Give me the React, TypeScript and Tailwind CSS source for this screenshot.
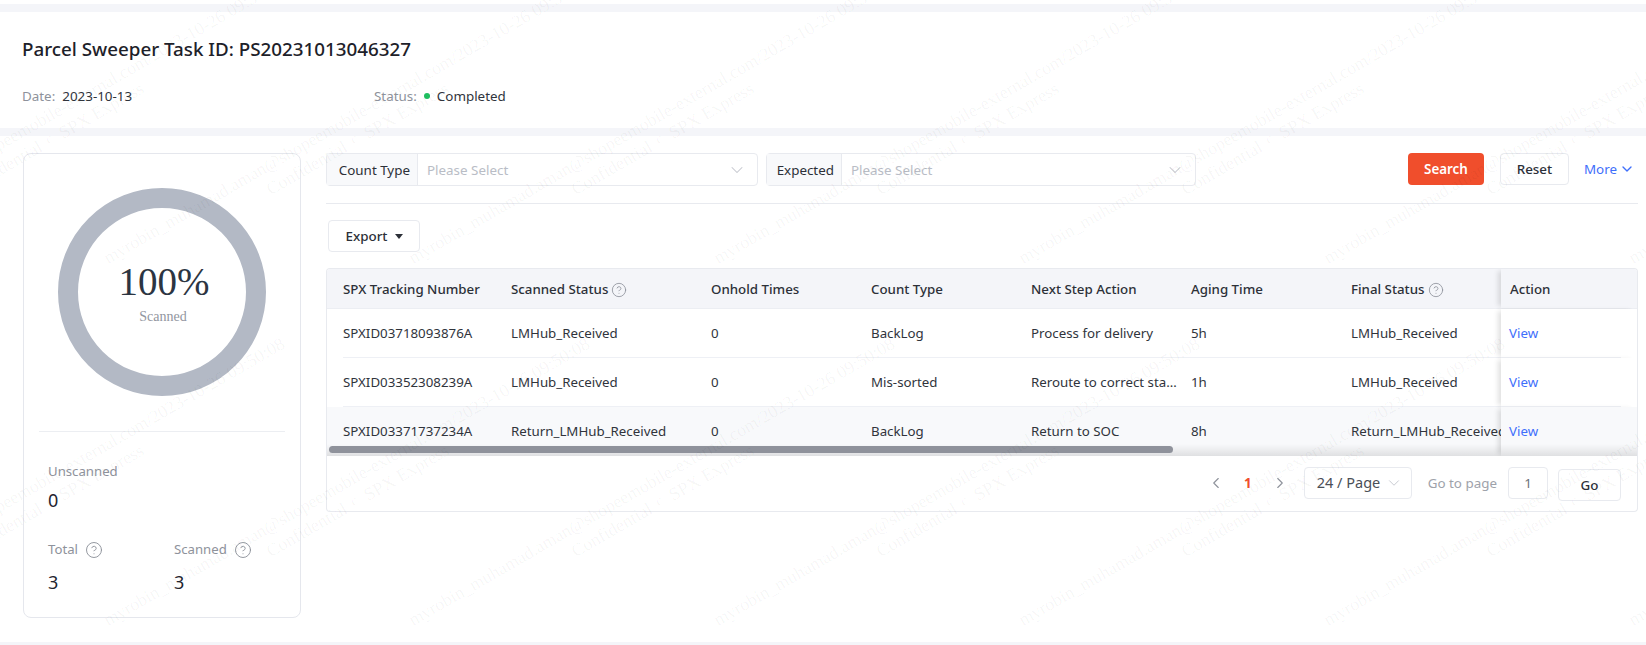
import React from 'react';
import { ChevronDown, ChevronLeft, ChevronRight, CircleHelp } from 'lucide-react';

const FONT = "font-['Noto_Sans','Liberation_Sans',sans-serif]";

const rows = [
  { id: 'SPXID03718093876A', scanned: 'LMHub_Received', onhold: '0', count: 'BackLog', next: 'Process for delivery', aging: '5h', final: 'LMHub_Received' },
  { id: 'SPXID03352308239A', scanned: 'LMHub_Received', onhold: '0', count: 'Mis-sorted', next: 'Reroute to correct station', aging: '1h', final: 'LMHub_Received' },
  { id: 'SPXID03371737234A', scanned: 'Return_LMHub_Received', onhold: '0', count: 'BackLog', next: 'Return to SOC', aging: '8h', final: 'Return_LMHub_Received' },
];

const columns = 'grid grid-cols-[168px_200px_160px_160px_160px_160px_150px]';

function Help({ className }: { className?: string }) {
  return <CircleHelp className={className} strokeWidth={1.25} />;
}

function Watermark() {
  const tiles = Array.from({ length: 16 }, (_, i) => i);
  return (
    <div className="absolute inset-0 overflow-hidden pointer-events-none">
      <div className="absolute left-[-411px] top-[-52px] grid grid-cols-[repeat(8,305px)] grid-rows-[repeat(2,362px)]">
        {tiles.map((i) => (
          <div key={i} className="flex items-center justify-center">
            <div className="-rotate-30 shrink-0 whitespace-nowrap text-center font-['Liberation_Serif',serif] text-[18px] leading-[22px] text-black/[0.045]">
              <div>myrobin_muhamad.aman@shopeemobile-external.com/2023-10-26 09:50:08</div>
              <div>Confidential © SPX Express</div>
            </div>
          </div>
        ))}
      </div>
    </div>
  );
}

function Donut() {
  return (
    <svg width="208" height="208" viewBox="0 0 208 208" className="mx-auto block">
      <circle cx="104" cy="104" r="94" fill="none" stroke="#b3b9c5" strokeWidth="20" />
      <text x="106" y="107" textAnchor="middle" fontFamily="'Liberation Serif', serif" fontSize="39" fill="#2c3542">100%</text>
      <text x="105" y="133" textAnchor="middle" fontFamily="'Liberation Serif', serif" fontSize="14" fill="#9296a0">Scanned</text>
    </svg>
  );
}

function SummaryCard() {
  return (
    <div className="w-[278px] h-[465px] shrink-0 rounded-lg border border-[#e5e7ed] pt-[34px] px-[15px]">
      <Donut />
      <div className="mt-[35px] border-t border-[#eceef2]" />
      <div className="pl-[9px] pt-[29px]">
        <div className="text-[13.2px] leading-[20px] text-[#8e929b]">Unscanned</div>
        <div className="mt-[7px] text-[18px] leading-[24px] text-[#1f2530]">0</div>
        <div className="mt-[27px] grid grid-cols-[126px_1fr]">
          <div>
            <div className="flex items-center gap-[7px] text-[13.2px] leading-[20px] text-[#8e929b]">
              Total <Help className="w-[18px] h-[18px] mt-[2px]" />
            </div>
            <div className="mt-[11px] text-[18px] leading-[24px] text-[#1f2530]">3</div>
          </div>
          <div>
            <div className="flex items-center gap-[7px] text-[13.2px] leading-[20px] text-[#8e929b]">
              Scanned <Help className="w-[18px] h-[18px] mt-[2px]" />
            </div>
            <div className="mt-[11px] text-[18px] leading-[24px] text-[#1f2530]">3</div>
          </div>
        </div>
      </div>
    </div>
  );
}

function FilterSelect({ label, labelWidth, width }: { label: string; labelWidth: string; width: string }) {
  return (
    <div className={`flex h-[33px] rounded border border-[#e8eaef] text-[13.4px] ${width}`}>
      <div className={`flex items-center justify-end border-r border-[#e8eaef] bg-[#f8f9fb] pr-[7px] pt-px text-[#2c3038] ${labelWidth}`}>{label}</div>
      <div className="flex flex-1 items-center justify-between pl-[9px] pr-[10px] pt-px text-[#b9bdc6]">
        Please Select
        <ChevronDown className="w-5 h-5 text-[#c4c7ce]" strokeWidth={1.25} />
      </div>
    </div>
  );
}

function Filters() {
  return (
    <div className="flex items-start border-b border-[#e8eaef] h-[51px]">
      <div className="flex gap-2">
        <FilterSelect label="Count Type" labelWidth="w-[91px]" width="w-[432px]" />
        <FilterSelect label="Expected" labelWidth="w-[75px]" width="w-[430px]" />
      </div>
      <div className="ml-auto flex items-center text-[13.4px]">
        <button className="h-[32px] w-[76px] rounded bg-[#f04e2c] pt-px font-semibold text-white">Search</button>
        <button className="ml-4 h-[32px] w-[69px] rounded border border-[#e8eaef] pt-px font-medium text-[#2c3038]">Reset</button>
        <button className="ml-[15px] mr-[3px] flex items-center gap-[2px] text-[#3f6ffb]">
          More <ChevronDown className="w-4 h-4" strokeWidth={2} />
        </button>
      </div>
    </div>
  );
}

function ResultTable() {
  return (
    <div className="relative rounded-t border-x border-t border-[#e8eaef] overflow-hidden text-[13.3px] text-[#30343c]">
      <div className="flex h-[40px] bg-[#f4f5f9] border-b border-[#eceef3] font-medium text-[#2c3038]">
        <div className={`${columns} flex-1 min-w-0 overflow-hidden pl-4 pt-[2px] items-center`}>
          <div>SPX Tracking Number</div>
          <div className="flex items-center gap-[3px]">Scanned Status <Help className="w-4 h-4 text-[#8e929b]" /></div>
          <div>Onhold Times</div>
          <div>Count Type</div>
          <div>Next Step Action</div>
          <div>Aging Time</div>
          <div className="flex items-center gap-[3px]">Final Status <Help className="w-4 h-4 text-[#8e929b]" /></div>
        </div>
        <div className="flex w-[136px] shrink-0 items-center pl-[9px] pt-[2px] shadow-[-5px_0_5px_-2px_rgba(0,0,0,0.12)]">Action</div>
      </div>
      {rows.map((r, i) => (
        <div key={r.id} className={`flex h-[49px] ${i === 2 ? 'bg-[#f8f9fb]' : 'bg-white'}`}>
          <div className="flex-1 min-w-0 overflow-hidden pl-4">
            <div className={`${columns} h-full items-center ${i < 2 ? 'border-b border-[#eef0f5] pt-px' : ''}`}>
              <div>{r.id}</div>
              <div>{r.scanned}</div>
              <div>{r.onhold}</div>
              <div>{r.count}</div>
              <div className="truncate pr-[12px]">{r.next}</div>
              <div>{r.aging}</div>
              <div className="whitespace-nowrap">{r.final}</div>
            </div>
          </div>
          <div className={`w-[136px] shrink-0 pr-4 shadow-[-5px_0_5px_-2px_rgba(0,0,0,0.12)] ${i === 2 ? 'bg-[#f8f9fb]' : 'bg-white'}`}>
            <div className={`flex h-full items-center pl-[8px] text-[#3f6ffb] ${i < 2 ? 'border-b border-[#eef0f5] pt-px' : ''}`}>View</div>
          </div>
        </div>
      ))}
      <div className="absolute inset-x-0 bottom-0 h-[12px] bg-gradient-to-b from-transparent to-black/10" />
      <div className="absolute left-[2px] bottom-[3px] h-[7px] w-[844px] rounded-full bg-[#8f929b]" />
    </div>
  );
}

function Pagination() {
  return (
    <div className="flex h-[56px] items-start justify-end rounded-b border border-t-0 border-[#e8eaef] pr-4 pt-[11px] text-[13.4px]">
      <ChevronLeft className="mt-[7px] w-[18px] h-[18px] text-[#8e929b]" strokeWidth={1.5} />
      <span className="mt-[6px] ml-[19px] font-bold text-[#f04e2c]">1</span>
      <ChevronRight className="mt-[7px] ml-[19px] w-[18px] h-[18px] text-[#8e929b]" strokeWidth={1.5} />
      <div className="ml-[15px] flex h-[32px] w-[108px] items-center justify-between whitespace-nowrap rounded border border-[#e8eaef] pl-[12px] pr-[8px] text-[14.5px] text-[#4b4f57]">
        24 / Page
        <ChevronDown className="w-[18px] h-[18px] shrink-0 text-[#c4c7ce]" strokeWidth={1.25} />
      </div>
      <span className="ml-4 mt-[6px] text-[#9ea2aa]">Go to page</span>
      <div className="ml-[11px] flex h-[32px] w-[40px] items-center justify-center rounded border border-[#e8eaef] text-[#6d7179]">1</div>
      <button className="ml-[10px] mt-[2px] h-[32px] w-[63px] rounded border border-[#e8eaef] font-medium text-[#2c3038]">Go</button>
    </div>
  );
}

export default function App() {
  return (
    <div className={`relative h-[645px] overflow-hidden bg-[#f4f5f9] ${FONT}`}>
      <div className="h-1 bg-white" />
      <div className="mt-2 h-[116px] bg-white pl-[22px] pt-[24px]">
        <h1 className="text-[18.8px] leading-[26px] font-medium text-[#1d2129]">Parcel Sweeper Task ID: PS20231013046327</h1>
        <div className="mt-[24px] flex text-[13.4px] leading-[20px]">
          <div className="flex w-[352px]">
            <span className="text-[#8e929b]">Date:</span>
            <span className="ml-[7px] text-[#30343c]">2023-10-13</span>
          </div>
          <div className="flex items-center">
            <span className="text-[#8e929b]">Status:</span>
            <span className="ml-[7px] h-[6px] w-[6px] rounded-full bg-[#1fbf60]" />
            <span className="ml-[7px] text-[#30343c]">Completed</span>
          </div>
        </div>
      </div>
      <div className="mt-2 flex h-[506px] gap-[25px] bg-white pl-[23px] pr-2 pt-[17px]">
        <SummaryCard />
        <div className="flex-1 min-w-0">
          <Filters />
          <button className="mt-[16px] ml-[2px] flex h-[32px] w-[92px] items-center justify-center gap-[7px] rounded border border-[#e8eaef] text-[13.4px] font-medium text-[#2c3038]">
            Export <span className="h-0 w-0 border-x-[4px] border-t-[5px] border-x-transparent border-t-[#2c3038]" />
          </button>
          <div className="mt-4">
            <ResultTable />
            <Pagination />
          </div>
        </div>
      </div>
      <Watermark />
    </div>
  );
}
